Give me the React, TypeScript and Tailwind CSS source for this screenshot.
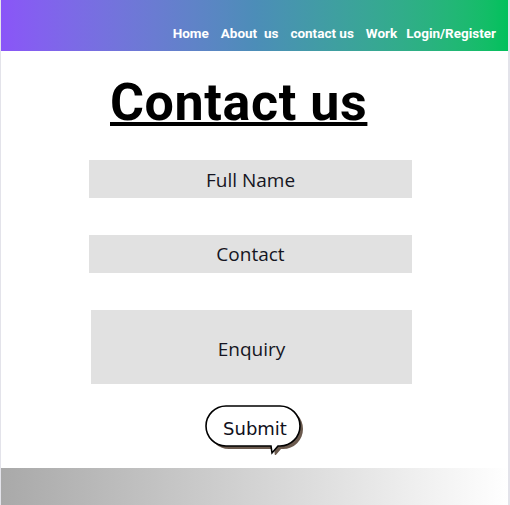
import React from "react";

export default function App() {
  return (
    <div className="w-[510px] h-[505px] overflow-hidden bg-white border-l border-r-2 border-[#e3e3ea] flex flex-col">
      <header className="h-[51px] shrink-0 bg-gradient-to-r from-[#8a55f8] via-[#4c8db8] to-[#00c15c] flex items-end justify-end pr-[12px] pb-[11px] gap-3 text-white font-bold text-[13.5px] leading-none font-['Roboto',sans-serif]">
        <span>Home</span>
        <span className="whitespace-pre">About  us</span>
        <span>contact us</span>
        <span>Work</span>
        <span className="-ml-[3px]">Login/Register</span>
      </header>
      <h1 className="mt-[26px] ml-[109px] text-[52px] leading-none font-bold tracking-[0.6px] text-black underline decoration-4 underline-offset-2 font-['Roboto',sans-serif]">
        Contact us
      </h1>
      <div className="mt-[31px] ml-[88px] w-[323px] h-[38px] pt-[2px] bg-[#e1e1e1] flex items-center justify-center text-[19px] text-[#151522] font-['Open_Sans',sans-serif]">
        Full Name
      </div>
      <div className="mt-[37px] ml-[88px] w-[323px] h-[38px] pt-[2px] bg-[#e1e1e1] flex items-center justify-center text-[19px] text-[#151522] font-['Open_Sans',sans-serif]">
        Contact
      </div>
      <div className="mt-[37px] ml-[90px] w-[321px] h-[75px] pt-[4px] bg-[#e1e1e1] flex items-center justify-center text-[19px] text-[#151522] font-['Open_Sans',sans-serif]">
        Enquiry
      </div>
      <div className="mt-[19px] ml-[203px] w-[104px] h-[52px] relative">
        <svg width="104" height="52" viewBox="0 0 104 52" className="absolute inset-0">
          <path
            d="M 25 6 H 79 A 20 20 0 0 1 79 46 H 77 L 71 53 L 70 46 H 25 A 20 20 0 0 1 25 6 Z"
            fill="#6b5a4e"
          />
          <path
            d="M 22 3 H 76 A 20 20 0 0 1 76 43 H 74 L 68 50 L 67 43 H 22 A 20 20 0 0 1 22 3 Z"
            fill="#ffffff"
            stroke="#000000"
            strokeWidth="1.6"
          />
        </svg>
        <span className="absolute left-[2px] top-[3px] w-[94px] h-[40px] flex items-center justify-center text-[18px] text-[#101020] font-['DejaVu_Sans',sans-serif] leading-none pt-[5px] pl-[4px]">
          Submit
        </span>
      </div>
      <footer className="mt-[13px] h-[37px] shrink-0 bg-gradient-to-r from-[#a9a9a9] to-[#ffffff]" />
    </div>
  );
}
